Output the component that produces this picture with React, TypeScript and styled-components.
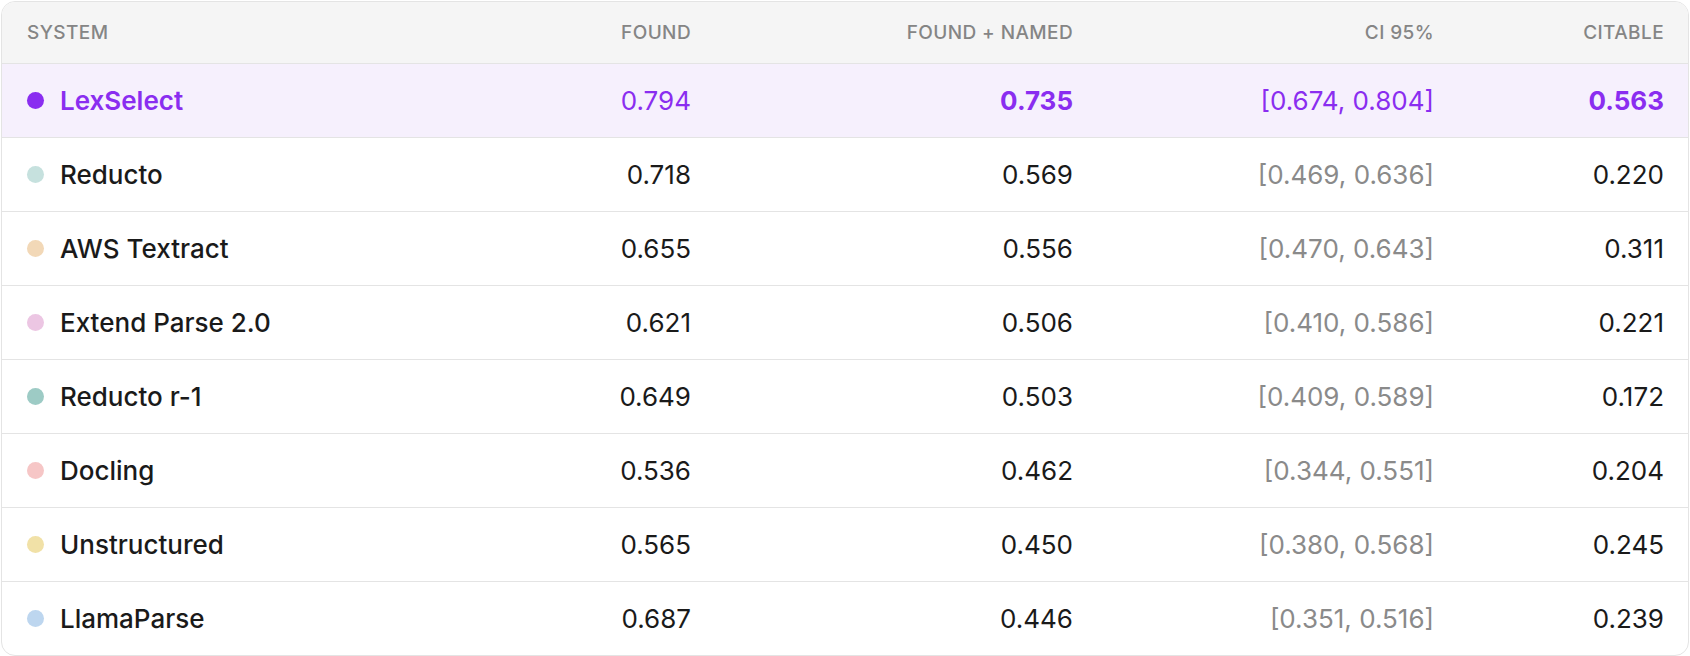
import React from "react";
import styled, { createGlobalStyle, css } from "styled-components";

const Global = createGlobalStyle`
  html, body { margin: 0; padding: 0; background: #fff; }
  body { font-family: Inter, "Noto Sans", sans-serif; }
`;

const Card = styled.div`
  margin: 1px;
  width: 1688px;
  box-sizing: border-box;
  border: 1px solid #e4e4e4;
  border-radius: 14px;
  overflow: hidden;
  background: #fff;
`;

const cols = "414px 250px 382px 361px 230px";

const Head = styled.div`
  display: grid;
  grid-template-columns: ${cols};
  padding: 0 25px;
  height: 61px;
  align-items: center;
  background: #f5f5f5;
  border-bottom: 1px solid #e4e4e4;
  color: #858585;
  font-size: 19px;
  font-weight: 500;
  letter-spacing: 0.4px;
  text-transform: uppercase;
`;

const HCell = styled.div<{ $left?: boolean }>`
  text-align: ${(p) => (p.$left ? "left" : "right")};
`;

const Row = styled.div<{ $hl?: boolean; $last?: boolean }>`
  display: grid;
  grid-template-columns: ${cols};
  padding: 0 25px;
  height: 73px;
  align-items: center;
  font-size: 26px;
  color: #1a1a1a;
  border-bottom: ${(p) => (p.$last ? "none" : "1px solid #e4e4e4")};
  ${(p) =>
    p.$hl &&
    css`
      background: #f6f0fd;
      color: #8a2df0;
    `}
`;

const Name = styled.div<{ $hl?: boolean }>`
  display: flex;
  align-items: center;
  gap: 16px;
  font-weight: ${(p) => (p.$hl ? 600 : 500)};
`;

const Dot = styled.span<{ $c: string }>`
  width: 17px;
  height: 17px;
  border-radius: 50%;
  background: ${(p) => p.$c};
`;

const Num = styled.div<{ $bold?: boolean; $muted?: boolean }>`
  text-align: right;
  font-weight: ${(p) => (p.$bold ? 700 : 400)};
  ${(p) => p.$muted && css`color: #8a8a8a;`}
`;

const rows = [
  ["LexSelect", "#8a2df0", "0.794", "0.735", "[0.674, 0.804]", "0.563"],
  ["Reducto", "#c6e1de", "0.718", "0.569", "[0.469, 0.636]", "0.220"],
  ["AWS Textract", "#f2d8b7", "0.655", "0.556", "[0.470, 0.643]", "0.311"],
  ["Extend Parse 2.0", "#ecc6e3", "0.621", "0.506", "[0.410, 0.586]", "0.221"],
  ["Reducto r-1", "#9dcbc5", "0.649", "0.503", "[0.409, 0.589]", "0.172"],
  ["Docling", "#f6c6c6", "0.536", "0.462", "[0.344, 0.551]", "0.204"],
  ["Unstructured", "#f1e1a7", "0.565", "0.450", "[0.380, 0.568]", "0.245"],
  ["LlamaParse", "#bdd6ef", "0.687", "0.446", "[0.351, 0.516]", "0.239"],
];

export default function App() {
  return (
    <>
      <Global />
      <Card>
        <Head>
          <HCell $left>System</HCell>
          <HCell>Found</HCell>
          <HCell>Found + Named</HCell>
          <HCell>CI 95%</HCell>
          <HCell>Citable</HCell>
        </Head>
        {rows.map((r, i) => {
          const hl = i === 0;
          return (
            <Row key={r[0]} $hl={hl} $last={i === rows.length - 1}>
              <Name $hl={hl}>
                <Dot $c={r[1]} />
                {r[0]}
              </Name>
              <Num>{r[2]}</Num>
              <Num $bold={hl}>{r[3]}</Num>
              <Num $muted={!hl}>{r[4]}</Num>
              <Num $bold={hl}>{r[5]}</Num>
            </Row>
          );
        })}
      </Card>
    </>
  );
}
